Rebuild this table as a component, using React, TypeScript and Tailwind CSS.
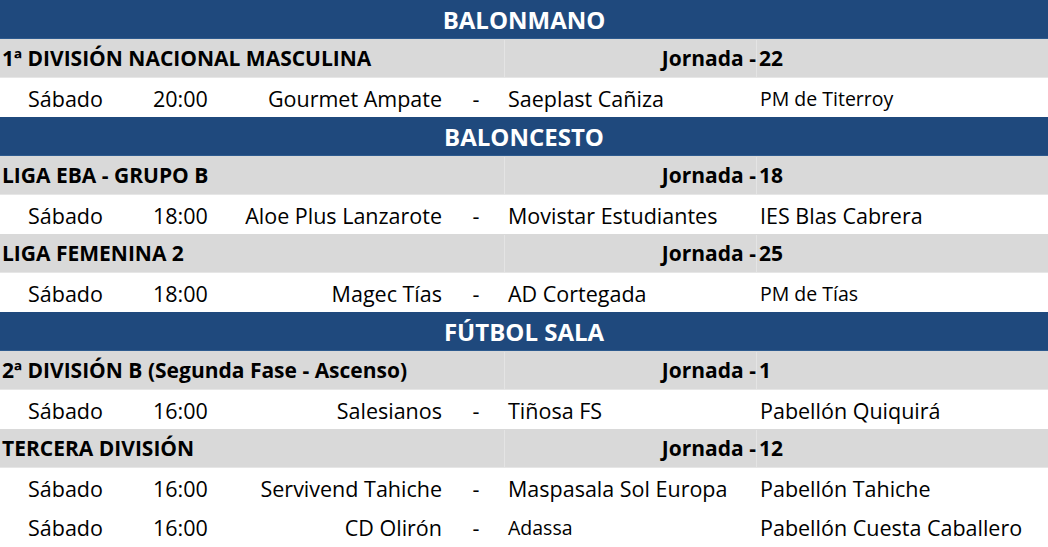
import React from "react";

type Match = {
  day: string;
  time: string;
  home: string;
  away: string;
  venue: string;
  smallAway?: boolean;
  smallVenue?: boolean;
};

type League = { name: string; jornada: string; matches: Match[] };
type Sport = { title: string; leagues: League[] };

const sports: Sport[] = [
  {
    title: "BALONMANO",
    leagues: [
      {
        name: "1ª DIVISIÓN NACIONAL MASCULINA",
        jornada: "22",
        matches: [
          { day: "Sábado", time: "20:00", home: "Gourmet Ampate", away: "Saeplast Cañiza", venue: "PM de Titerroy", smallVenue: true },
        ],
      },
    ],
  },
  {
    title: "BALONCESTO",
    leagues: [
      {
        name: "LIGA EBA - GRUPO B",
        jornada: "18",
        matches: [
          { day: "Sábado", time: "18:00", home: "Aloe Plus Lanzarote", away: "Movistar Estudiantes", venue: "IES Blas Cabrera" },
        ],
      },
      {
        name: "LIGA FEMENINA 2",
        jornada: "25",
        matches: [
          { day: "Sábado", time: "18:00", home: "Magec Tías", away: "AD Cortegada", venue: "PM de Tías", smallVenue: true },
        ],
      },
    ],
  },
  {
    title: "FÚTBOL SALA",
    leagues: [
      {
        name: "2ª DIVISIÓN B (Segunda Fase - Ascenso)",
        jornada: "1",
        matches: [
          { day: "Sábado", time: "16:00", home: "Salesianos", away: "Tiñosa FS", venue: "Pabellón Quiquirá" },
        ],
      },
      {
        name: "TERCERA DIVISIÓN",
        jornada: "12",
        matches: [
          { day: "Sábado", time: "16:00", home: "Servivend Tahiche", away: "Maspasala Sol Europa", venue: "Pabellón Tahiche" },
          { day: "Sábado", time: "16:00", home: "CD Olirón", away: "Adassa", venue: "Pabellón Cuesta Caballero", smallAway: true },
        ],
      },
    ],
  },
];

function MatchRow({ m }: { m: Match }) {
  return (
    <div className="flex h-[39px] items-center bg-white pt-[2px] text-[21.5px] text-black">
      <div className="w-[26px] shrink-0" />
      <div className="w-[124px] shrink-0 pl-[2px]">{m.day}</div>
      <div className="w-[80px] shrink-0 pl-[3px]">{m.time}</div>
      <div className="w-[217px] shrink-0 pr-[5px] text-right">{m.home}</div>
      <div className="w-[58px] shrink-0 text-center">-</div>
      <div className={`w-[252px] shrink-0 pl-[3px] ${m.smallAway ? "text-[19.5px]" : ""}`}>{m.away}</div>
      <div className={`flex-1 pl-[3px] ${m.smallVenue ? "text-[19.5px]" : ""}`}>{m.venue}</div>
    </div>
  );
}

function LeagueRow({ l }: { l: League }) {
  return (
    <div className="flex h-[39px] items-center border-b border-[#e6e6e6] bg-[#d9d9d9] pt-[1px] text-[21px] font-bold text-black">
      <div className="flex h-full w-[505px] shrink-0 items-center border-r border-[#e4e4e4] pl-[2px]">{l.name}</div>
      <div className="flex h-full w-[252px] shrink-0 items-center justify-end border-r border-[#e4e4e4]">Jornada -</div>
      <div className="flex-1 pl-[2px]">{l.jornada}</div>
    </div>
  );
}

export default function App() {
  return (
    <div className="w-[1048px] h-[547px] overflow-hidden bg-white font-['Open_Sans','Liberation_Sans',sans-serif] leading-none">
      {sports.map((s) => (
        <div key={s.title}>
          <div className="flex h-[39px] items-center justify-center border-b border-[#2d5a8e] bg-[#1f497d] pt-[1px] text-[24px] font-bold text-white">
            {s.title}
          </div>
          {s.leagues.map((l) => (
            <div key={l.name}>
              <LeagueRow l={l} />
              {l.matches.map((m, i) => (
                <MatchRow key={i} m={m} />
              ))}
            </div>
          ))}
        </div>
      ))}
    </div>
  );
}
